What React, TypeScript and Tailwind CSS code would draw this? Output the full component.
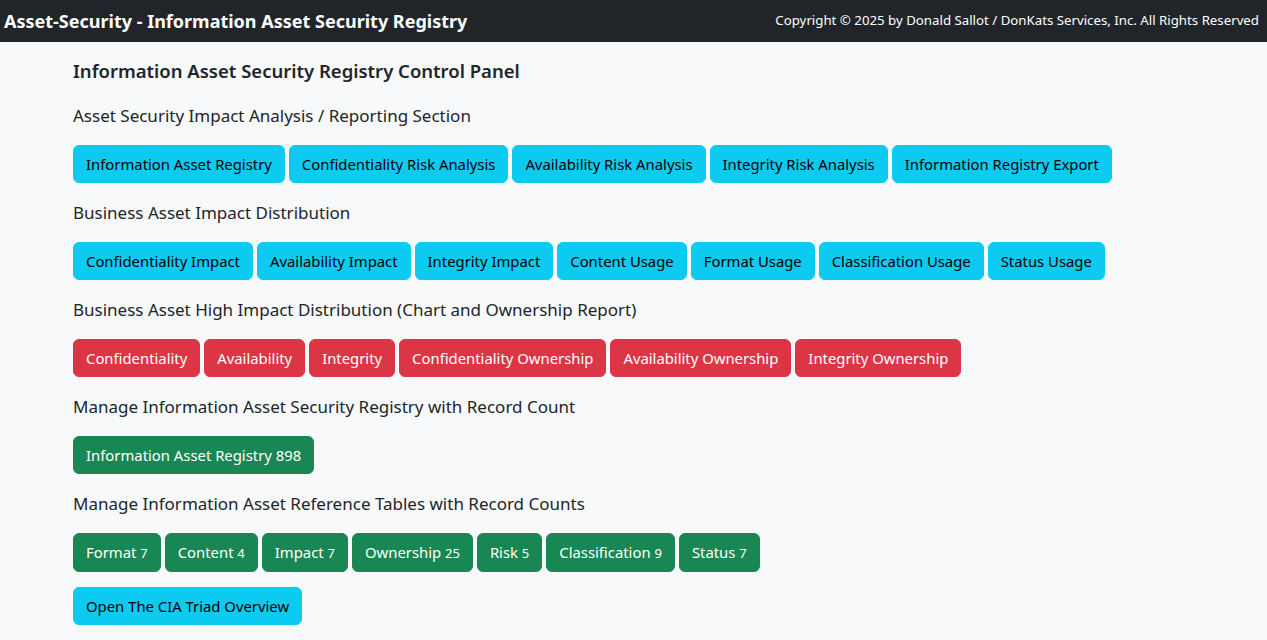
import React from "react";

type Tone = "info" | "danger" | "success";

type Section = {
  label: string;
  tone: Tone;
  buttons: string[];
};

const toneClass: Record<Tone, string> = {
  info: "bg-[#0dcaf0] border-[#0dcaf0] text-[#000]",
  danger: "bg-[#dc3545] border-[#dc3545] text-white",
  success: "bg-[#198754] border-[#198754] text-white",
};

const sections: Section[] = [
  {
    label: "Asset Security Impact Analysis / Reporting Section",
    tone: "info",
    buttons: [
      "Information Asset Registry",
      "Confidentiality Risk Analysis",
      "Availability Risk Analysis",
      "Integrity Risk Analysis",
      "Information Registry Export",
    ],
  },
  {
    label: "Business Asset Impact Distribution",
    tone: "info",
    buttons: [
      "Confidentiality Impact",
      "Availability Impact",
      "Integrity Impact",
      "Content Usage",
      "Format Usage",
      "Classification Usage",
      "Status Usage",
    ],
  },
  {
    label: "Business Asset High Impact Distribution (Chart and Ownership Report)",
    tone: "danger",
    buttons: [
      "Confidentiality",
      "Availability",
      "Integrity",
      "Confidentiality Ownership",
      "Availability Ownership",
      "Integrity Ownership",
    ],
  },
  {
    label: "Manage Information Asset Security Registry with Record Count",
    tone: "success",
    buttons: ["Information Asset Registry 898"],
  },
];

const refTables = [
  { name: "Format", count: 7 },
  { name: "Content", count: 4 },
  { name: "Impact", count: 7 },
  { name: "Ownership", count: 25 },
  { name: "Risk", count: 5 },
  { name: "Classification", count: 9 },
  { name: "Status", count: 7 },
];

const Btn: React.FC<{ tone: Tone; children: React.ReactNode }> = ({ tone, children }) => (
  <button
    className={`border rounded-md px-3 py-[6px] text-[14.85px] leading-6 ${toneClass[tone]}`}
  >
    {children}
  </button>
);

const App: React.FC = () => {
  return (
    <div
      className="min-h-[640px] bg-[#f8f9fa] text-[#212529]"
      style={{ fontFamily: '"Noto Sans", "Open Sans", sans-serif' }}
    >
      <nav className="h-[42px] bg-[#212529] flex items-center justify-between pl-1 pr-2 text-white">
        <div className="text-[18px] font-bold">Asset-Security - Information Asset Security Registry</div>
        <div className="text-[13.25px]">
          Copyright © 2025 by Donald Sallot / DonKats Services, Inc. All Rights Reserved
        </div>
      </nav>

      <div className="pl-[73px] pt-[17px]">
        <h5 className="text-[18.5px] font-semibold leading-6">
          Information Asset Security Registry Control Panel
        </h5>

        <div className="mt-[19px]">
          {sections.map((s, i) => (
            <div key={i} className={i > 0 ? "mt-4" : ""}>
              <div className="text-[17px] leading-7 h-7">{s.label}</div>
              <div className="mt-[15px] flex flex-wrap gap-1">
                {s.buttons.map((b) => (
                  <Btn key={b} tone={s.tone}>
                    {b}
                  </Btn>
                ))}
              </div>
            </div>
          ))}

          <div className="mt-4">
            <div className="text-[17px] leading-7 h-7">
              Manage Information Asset Reference Tables with Record Counts
            </div>
            <div className="mt-[15px] flex flex-wrap gap-1">
              {refTables.map((t) => (
                <Btn key={t.name} tone="success">
                  {t.name} <span className="text-[13px]">{t.count}</span>
                </Btn>
              ))}
            </div>
          </div>

          <div className="mt-[15px]">
            <Btn tone="info">Open The CIA Triad Overview</Btn>
          </div>
        </div>
      </div>
    </div>
  );
};

export default App;
